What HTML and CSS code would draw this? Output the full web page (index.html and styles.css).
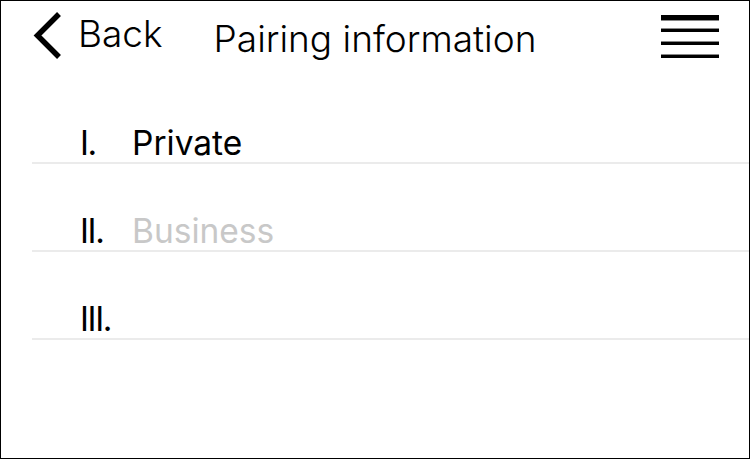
FILE: index.html
```html
<!DOCTYPE html>
<html lang="en">
<head>
<meta charset="utf-8">
<title>Pairing information</title>
<link rel="stylesheet" href="styles.css">
</head>
<body>
<div class="screen">
  <header class="topbar">
    <a class="back" href="#">
      <svg class="chevron" width="32" height="50" viewBox="0 0 32 50" aria-hidden="true">
        <polyline points="27,3 5.5,24.5 27,46" fill="none" stroke="#000" stroke-width="5.5" stroke-linejoin="miter" stroke-linecap="butt"/>
      </svg>
      <span class="back-label">Back</span>
    </a>
    <h1 class="title">Pairing information</h1>
    <button class="menu" aria-label="Menu">
      <svg width="58" height="44" viewBox="0 0 58 44" aria-hidden="true">
        <rect x="0" y="0" width="58" height="5" fill="#000"/>
        <rect x="0" y="5" width="58" height="1" fill="#888"/>
        <rect x="0" y="14" width="58" height="3" fill="#000"/>
        <rect x="0" y="13" width="58" height="1" fill="#888"/>
        <rect x="0" y="27" width="58" height="3" fill="#000"/>
        <rect x="0" y="26" width="58" height="1" fill="#888"/>
        <rect x="0" y="40" width="58" height="3" fill="#000"/>
        <rect x="0" y="39" width="58" height="1" fill="#888"/>
      </svg>
    </button>
  </header>
  <ol class="list">
    <li class="row"><span class="num">I.</span><span class="label">Private</span></li>
    <li class="row"><span class="num">II.</span><span class="label muted">Business</span></li>
    <li class="row"><span class="num">III.</span><span class="label"></span></li>
  </ol>
</div>
</body>
</html>
```

FILE: styles.css
```css
* { box-sizing: border-box; }
html, body { margin: 0; padding: 0; background: #fff; }
.screen {
  width: 750px;
  height: 459px;
  border: 1px solid #000;
  background: #fff;
  font-family: "Inter", "Liberation Sans", Arial, sans-serif;
  color: #000;
  overflow: hidden;
}
.topbar {
  display: flex;
  align-items: flex-start;
  height: 75px;
  padding: 0 30px 0 31px;
}
.back {
  display: flex;
  align-items: flex-start;
  color: #000;
  text-decoration: none;
}
.chevron { margin-top: 10px; display: block; }
.back-label {
  margin-left: 14px;
  margin-top: 14px;
  font-weight: 300;
  font-size: 37px;
  line-height: 1;
}
.title {
  margin: 19px 0 0 51px;
  font-weight: 300;
  font-size: 37px;
  line-height: 1;
}
.menu {
  margin-left: auto;
  margin-top: 14px;
  padding: 0;
  border: 0;
  background: none;
  display: block;
}
.menu svg { display: block; }
.list {
  list-style: none;
  margin: 0;
  padding: 0 0 0 31px;
}
.row {
  display: flex;
  align-items: flex-end;
  height: 88px;
  border-bottom: 2px solid #ebebeb;
  padding: 0 0 2px 48px;
  font-size: 33.5px;
  font-weight: 400;
  line-height: 1;
}
.num { width: 52px; letter-spacing: -1.4px; }
.label { color: #000; }
.muted { color: #c8c8c8; }
```
